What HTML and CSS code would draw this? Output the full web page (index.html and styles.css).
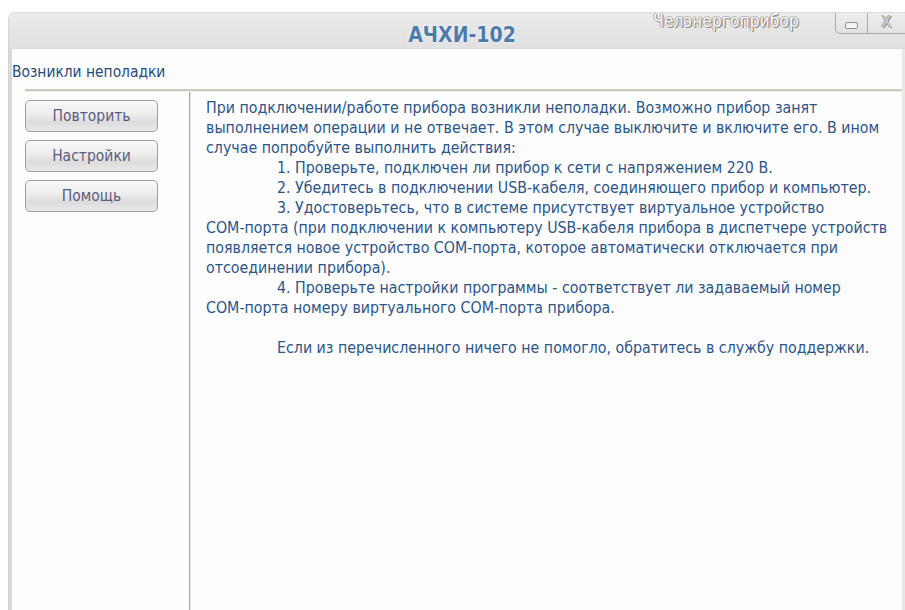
FILE: index.html
```html
<!DOCTYPE html>
<html lang="ru">
<head>
<meta charset="utf-8">
<title>АЧХИ-102</title>
<link rel="stylesheet" href="styles.css">
</head>
<body>
<div class="window">
  <div class="titlebar">
    <div class="title-side"></div>
    <div class="title">АЧХИ-102</div>
    <div class="title-side right">
      <span class="brand">Челэнергоприбор</span>
      <div class="controls">
        <button class="ctl min" aria-label="Свернуть"><span class="min-glyph"></span></button>
        <button class="ctl close" aria-label="Закрыть">X</button>
      </div>
    </div>
  </div>
  <div class="frame">
    <div class="content">
      <div class="header">Возникли неполадки</div>
      <div class="rule"></div>
      <div class="panes">
        <div class="sidebar">
          <button class="btn">Повторить</button>
          <button class="btn">Настройки</button>
          <button class="btn">Помощь</button>
        </div>
        <div class="message">
          <p>При подключении/работе прибора возникли неполадки. Возможно прибор занят<br>выполнением операции и не отвечает. В этом случае выключите и включите его. В ином<br>случае попробуйте выполнить действия:<br><span class="ind">1. Проверьте, подключен ли прибор к сети с напряжением 220 В.</span><br><span class="ind">2. Убедитесь в подключении USB-кабеля, соединяющего прибор и компьютер.</span><br><span class="ind">3. Удостоверьтесь, что в системе присутствует виртуальное устройство</span><br>COM-порта (при подключении к компьютеру USB-кабеля прибора в диспетчере устройств<br>появляется новое устройство COM-порта, которое автоматически отключается при<br>отсоединении прибора).<br><span class="ind">4. Проверьте настройки программы - соответствует ли задаваемый номер</span><br>COM-порта номеру виртуального COM-порта прибора.</p>
          <p class="support"><span class="ind">Если из перечисленного ничего не помогло, обратитесь в службу поддержки.</span></p>
        </div>
      </div>
    </div>
  </div>
</div>
</body>
</html>
```

FILE: styles.css
```css
* { box-sizing: border-box; }

html, body {
  margin: 0;
  height: 100%;
  background: #ffffff;
  overflow: hidden;
}

body {
  padding: 12px 0 0 8px;
  font-family: "DejaVu Sans Condensed", "DejaVu Sans", sans-serif;
}

.window {
  height: 598px;
  display: flex;
  flex-direction: column;
  border-radius: 7px 0 0 0;
  overflow: hidden;
  background: #fdfdfd;
  border-top: 1px solid #d9d9d9;
  border-left: 1px solid #d4d4d4;
}

/* title bar */
.titlebar {
  height: 36px;
  flex: none;
  display: grid;
  grid-template-columns: 1fr auto 1fr;
  background: linear-gradient(#ececec, #e4e4e4 60%, #e1e1e1);
  border-bottom: 1px solid #dadada;
}

.title {
  padding: 10px 0 0 10px;
  font-family: "DejaVu Sans Condensed", "DejaVu Sans", sans-serif;
  font-weight: bold;
  font-size: 21px;
  line-height: 24px;
  color: #4d7cab;
  text-shadow: 0 0 3px #f4f8fc, 0 0 1px #ffffff;
}

.title-side.right {
  display: flex;
  justify-content: flex-end;
  align-items: flex-start;
}

.brand {
  margin: -2px 36px 0 0;
  font-family: "DejaVu Sans Condensed", "DejaVu Sans", sans-serif;
  font-size: 17px;
  line-height: 20px;
  color: #fbfbfb;
  letter-spacing: 0.2px;
  text-shadow: 1px 1px 0 #8a8a8a, -1px 0 0 #a8a8a8, 0 -1px 0 #b8b8b8, 1px 0 1px #9c9c9c;
}

.controls {
  display: flex;
  height: 21px;
}

.ctl {
  margin: 0;
  padding: 0;
  height: 21px;
  border: 1px solid #a9a9a9;
  border-top: none;
  background: linear-gradient(#eeeeee, #e2e2e2);
  display: flex;
  align-items: center;
  justify-content: center;
  font-family: "DejaVu Sans", sans-serif;
}

.ctl.min {
  width: 33px;
  border-radius: 0 0 0 5px;
}

.min-glyph {
  width: 13px;
  height: 7px;
  border: 1.5px solid #8e8e8e;
  border-radius: 2px;
  margin-top: 4px;
  background: #f4f4f4;
}

.ctl.close {
  width: 37px;
  border-left: none;
  border-right: none;
  color: #d0d0d0;
  font-size: 15px;
  text-shadow: 1px 1px 0 #8a8a8a, -1px 0 0 #9a9a9a;
  padding-bottom: 2px;
}

/* window body */
.frame {
  flex: 1;
  display: flex;
  border-left: 3px solid #d8d8d8;
  border-right: 3px solid #e9e9e9;
}

.content {
  flex: 1;
  display: flex;
  flex-direction: column;
  background: #fdfdfd;
}

.header {
  height: 40px;
  padding: 13px 0 0 0;
  font-size: 15.4px;
  line-height: 20px;
  color: #264a78;
}

.rule {
  margin-left: 13px;
  height: 3px;
  border-top: 2px solid #c9c9c6;
  border-bottom: 1px solid #efefdf;
}

.panes {
  flex: 1;
  display: flex;
}

.sidebar {
  width: 178px;
  flex: none;
  display: flex;
  flex-direction: column;
  align-items: flex-start;
  gap: 8px;
  padding: 8px 0 0 13px;
  border-right: 1px solid #a9a9a9;
  box-shadow: 1px 0 0 #e6e6e6;
}

.btn {
  width: 133px;
  height: 32px;
  margin: 0;
  padding: 0;
  border: 1px solid #9d9d9d;
  border-radius: 5px;
  background: linear-gradient(#f7f7f7 0%, #ededed 45%, #dcdcdc 70%, #e9e9e9 100%);
  box-shadow: inset 0 1px 0 #ffffff;
  font-family: "DejaVu Sans Condensed", "DejaVu Sans", sans-serif;
  font-size: 15.5px;
  color: #5a5c7a;
}

.message {
  flex: 1;
  padding: 6px 0 0 16px;
  font-size: 15.8px;
  line-height: 20px;
  color: #2c5587;
  white-space: nowrap;
}

.message p {
  margin: 0;
}

.message .support {
  margin-top: 20px;
}

.ind {
  padding-left: 71px;
}
```
